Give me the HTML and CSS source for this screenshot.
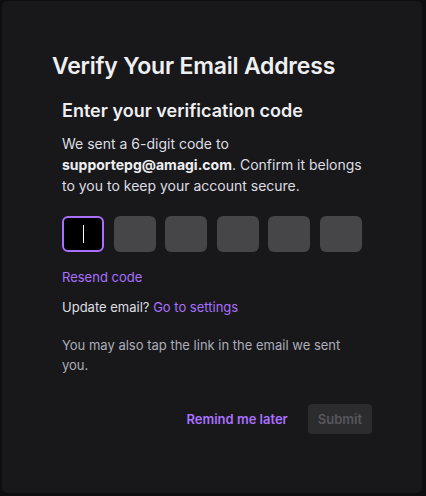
FILE: index.html
```html
<!DOCTYPE html>
<html>
<head>
<meta charset="utf-8">
<link rel="stylesheet" href="styles.css">
</head>
<body>
<div class="modal">
  <h1 class="title">Verify Your Email Address</h1>
  <div class="content">
    <h2 class="subtitle">Enter your verification code</h2>
    <p class="desc">We sent a 6-digit code to <strong>supportepg@amagi.com</strong>. Confirm it belongs to you to keep your account secure.</p>
    <div class="code">
      <div class="digit focused"><span class="caret"></span></div>
      <div class="digit"></div>
      <div class="digit"></div>
      <div class="digit"></div>
      <div class="digit"></div>
      <div class="digit"></div>
    </div>
    <a class="link resend">Resend code</a>
    <p class="update">Update email? <a class="link">Go to settings</a></p>
    <p class="note">You may also tap the link in the email we sent you.</p>
    <div class="actions">
      <button class="later">Remind me later</button>
      <button class="submit">Submit</button>
    </div>
  </div>
</div>
</body>
</html>
```
FILE: styles.css
```css
* { box-sizing: border-box; }
html, body { margin: 0; padding: 0; }
body {
  background: #0e0e10;
  width: 426px;
  height: 496px;
  font-family: Inter, "Noto Sans", sans-serif;
  color: #efeff1;
  padding: 1px 4px 3px 2px;
}
.modal {
  background: #18181b;
  height: 492px;
  border-radius: 5px;
  padding: 49px 50px 0 50px;
}
.title {
  margin: 0;
  font-size: 23px;
  line-height: 32px;
  font-weight: 600;
  letter-spacing: -0.2px;
  color: #efeff1;
}
.content {
  padding: 0 0 0 10px;
  margin-top: 17px;
}
.subtitle {
  margin: 0;
  font-size: 18px;
  line-height: 24px;
  font-weight: 600;
  color: #efeff1;
}
.desc {
  margin: 10px 0 0;
  font-size: 14px;
  line-height: 21px;
  color: #dedee3;
  width: 300px;
}
.desc strong { font-weight: 700; color: #efeff1; }
.code {
  display: flex;
  justify-content: space-between;
  width: 300px;
  margin-top: 20px;
}
.digit {
  width: 42px;
  height: 36px;
  background: #464649;
  border-radius: 6px;
  display: flex;
  align-items: center;
  justify-content: center;
}
.digit.focused {
  background: #000;
  border: 2px solid #a970ff;
}
.caret {
  width: 1px;
  height: 18px;
  background: #fff;
}
.link {
  color: #a970ff;
  cursor: pointer;
}
.resend {
  display: block;
  margin-top: 16px;
  font-size: 13px;
  line-height: 18px;
}
.update {
  margin: 12px 0 0;
  font-size: 13px;
  line-height: 18px;
  color: #dedee3;
}
.note {
  margin: 19px 0 0;
  font-size: 13px;
  line-height: 20px;
  color: #adadb8;
  width: 300px;
}
.actions {
  display: flex;
  justify-content: flex-end;
  align-items: center;
  gap: 20px;
  margin-top: 29px;
}
button {
  font-family: inherit;
  font-size: 13px;
  font-weight: 600;
  border: 0;
  cursor: pointer;
}
.later {
  background: none;
  color: #a970ff;
  padding: 0;
}
.submit {
  background: #2c2c2f;
  color: #57575c;
  height: 30px;
  padding: 0 10px;
  border-radius: 4px;
}
```
